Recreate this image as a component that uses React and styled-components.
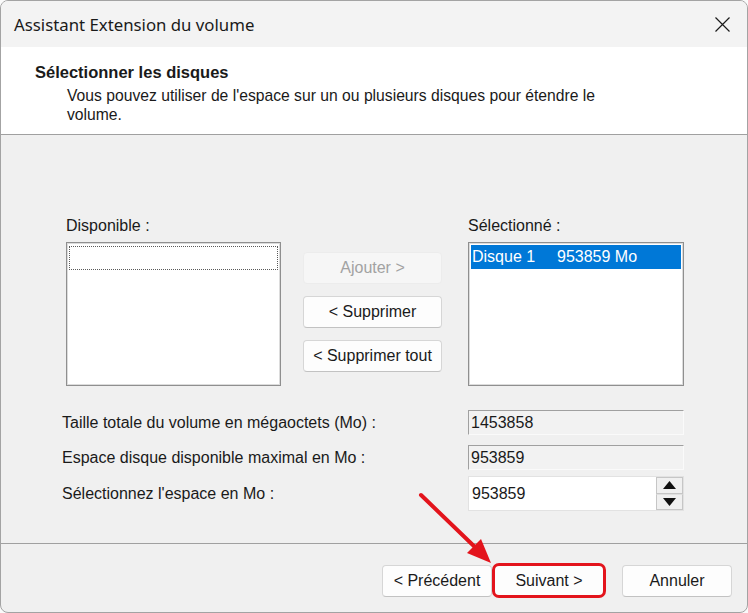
import React from "react";
import styled, { createGlobalStyle } from "styled-components";

const GlobalStyle = createGlobalStyle`
  html, body {
    margin: 0;
    padding: 0;
    background: #fafafa;
  }
  body {
    font-family: "Liberation Sans", Arial, sans-serif;
  }
`;

const Window = styled.div`
  position: relative;
  box-sizing: border-box;
  width: 748px;
  height: 613px;
  border: 1px solid #a3a3a3;
  border-radius: 8px;
  overflow: hidden;
  display: flex;
  flex-direction: column;
  background: #f0f0f0;
  color: #1a1a1a;
  font: 16px "Liberation Sans", Arial, sans-serif;
`;

const TitleBar = styled.div`
  height: 46px;
  flex: none;
  display: flex;
  align-items: center;
  justify-content: space-between;
  padding-left: 13px;
  background: #f3f3f3;
`;

const Title = styled.span`
  font: 16.8px "Noto Sans", "Open Sans", sans-serif;
  color: #1a1a1a;
`;

const CloseButton = styled.div`
  width: 50px;
  height: 46px;
  display: flex;
  align-items: center;
  justify-content: center;
`;

const Header = styled.div`
  box-sizing: border-box;
  height: 88px;
  flex: none;
  padding: 16px 0 0 34px;
  background: #fff;
  border-bottom: 1px solid #a0a0a0;
`;

const Heading = styled.div`
  font-weight: bold;
  font-size: 16.5px;
  line-height: 18px;
`;

const SubText = styled.div`
  margin: 5px 0 0 32px;
  width: 560px;
  font-size: 15.7px;
  line-height: 19px;
`;

const Content = styled.div`
  flex: 1;
  padding: 82px 0 0 61px;
`;

const ListsRow = styled.div`
  display: flex;
  margin-left: 4px;
`;

const ListColumn = styled.div`
  display: flex;
  flex-direction: column;
  width: ${(p) => p.$width}px;
`;

const Label = styled.div`
  line-height: 18px;
  margin-bottom: 7px;
`;

const ListBox = styled.div`
  box-sizing: border-box;
  height: 144px;
  padding: 2px;
  background: #fff;
  border: 1px solid #8f8f8f;
  box-shadow: inset 0 0 0 1px #dcdcdc;
`;

const FocusRow = styled.div`
  box-sizing: border-box;
  height: 24px;
  margin-top: 1px;
  border: 1px dotted #5a5a5a;
`;

const SelectedRow = styled.div`
  display: grid;
  grid-template-columns: 85px 1fr;
  height: 24px;
  align-items: center;
  padding-left: 1px;
  background: #0078d7;
  color: #fff;
`;

const ButtonsColumn = styled.div`
  display: flex;
  flex-direction: column;
  gap: 12px;
  width: 139px;
  margin: 35px 26px 0 22px;
`;

const Button = styled.button`
  box-sizing: border-box;
  height: 32px;
  width: ${(p) => (p.$width ? `${p.$width}px` : "100%")};
  margin-left: ${(p) => p.$offset || 0}px;
  padding: 0;
  font: 16px "Liberation Sans", Arial, sans-serif;
  color: #1a1a1a;
  background: #fdfdfd;
  border: 1px solid #d6d6d6;
  border-bottom-color: #c2c2c2;
  border-radius: 4px;

  &:disabled {
    color: #a2a2a2;
    background: #f6f6f6;
    border-color: #ececec;
  }
`;

const Fields = styled.div`
  margin-top: 24px;
  display: flex;
  flex-direction: column;
`;

const FieldRow = styled.div`
  display: grid;
  grid-template-columns: 406px 216px;
  align-items: center;
  margin-top: ${(p) => p.$gap || 0}px;
`;

const ReadonlyField = styled.div`
  box-sizing: border-box;
  height: 25px;
  padding-left: 2px;
  display: flex;
  align-items: center;
  background: #f2f2f2;
  border: 1px solid;
  border-color: #a0a0a0 #fafafa #fafafa #a0a0a0;
`;

const SpinField = styled.div`
  box-sizing: border-box;
  height: 35px;
  display: flex;
  align-items: center;
  padding: 0 0 0 3px;
  background: #fff;
  border: 1px solid #e2e2e2;
`;

const SpinValue = styled.span`
  flex: 1;
`;

const Spinner = styled.div`
  display: flex;
  flex-direction: column;
  width: 27px;
  height: 33px;
`;

const SpinButton = styled.div`
  box-sizing: border-box;
  flex: 1;
  display: flex;
  align-items: center;
  justify-content: center;
  background: #f0f0f0;
  border: 1px solid #c6c6c6;
  & + & {
    border-top-color: #e0e0e0;
  }
`;

const Footer = styled.div`
  box-sizing: border-box;
  height: 69px;
  flex: none;
  display: flex;
  justify-content: flex-end;
  align-items: flex-start;
  padding: 21px 15px 0 0;
  border-top: 1px solid #a0a0a0;
`;

const Highlight = styled.div`
  position: relative;
  margin-left: 2px;
  &::after {
    content: "";
    position: absolute;
    top: -2px;
    left: -2px;
    right: -2px;
    bottom: -1px;
    border: 3px solid #e3141c;
    border-radius: 7px;
    pointer-events: none;
  }
`;

const ArrowLayer = styled.svg`
  position: absolute;
  top: -1px;
  left: -1px;
  pointer-events: none;
`;

function Triangle({ up }) {
  return (
    <svg width="13" height="8" viewBox="0 0 13 8">
      <polygon points={up ? "6.5,0 13,8 0,8" : "0,0 13,0 6.5,8"} fill="#111" />
    </svg>
  );
}

export default function App() {
  return (
    <>
      <GlobalStyle />
      <Window>
        <TitleBar>
          <Title>Assistant Extension du volume</Title>
          <CloseButton>
            <svg width="15" height="15" viewBox="0 0 15 15">
              <path d="M0.5 0.5 L14.5 14.5 M14.5 0.5 L0.5 14.5" stroke="#1a1a1a" strokeWidth="1.2" />
            </svg>
          </CloseButton>
        </TitleBar>

        <Header>
          <Heading>Sélectionner les disques</Heading>
          <SubText>
            Vous pouvez utiliser de l'espace sur un ou plusieurs disques pour étendre le volume.
          </SubText>
        </Header>

        <Content>
          <ListsRow>
            <ListColumn $width={215}>
              <Label>Disponible :</Label>
              <ListBox>
                <FocusRow />
              </ListBox>
            </ListColumn>
            <ButtonsColumn>
              <Button disabled>Ajouter &gt;</Button>
              <Button>&lt; Supprimer</Button>
              <Button>&lt; Supprimer tout</Button>
            </ButtonsColumn>
            <ListColumn $width={216}>
              <Label>Sélectionné :</Label>
              <ListBox>
                <SelectedRow>
                  <span>Disque 1</span>
                  <span>953859 Mo</span>
                </SelectedRow>
              </ListBox>
            </ListColumn>
          </ListsRow>

          <Fields>
            <FieldRow>
              <span>Taille totale du volume en mégaoctets (Mo) :</span>
              <ReadonlyField>1453858</ReadonlyField>
            </FieldRow>
            <FieldRow $gap={10}>
              <span>Espace disque disponible maximal en Mo :</span>
              <ReadonlyField>953859</ReadonlyField>
            </FieldRow>
            <FieldRow $gap={6}>
              <span>Sélectionnez l'espace en Mo :</span>
              <SpinField>
                <SpinValue>953859</SpinValue>
                <Spinner>
                  <SpinButton><Triangle up /></SpinButton>
                  <SpinButton><Triangle /></SpinButton>
                </Spinner>
              </SpinField>
            </FieldRow>
          </Fields>
        </Content>

        <Footer>
          <Button $width={110}>&lt; Précédent</Button>
          <Highlight>
            <Button $width={110}>Suivant &gt;</Button>
          </Highlight>
          <Button $width={110} $offset={18}>Annuler</Button>
        </Footer>

        <ArrowLayer width="748" height="613" viewBox="0 0 748 613">
          <line x1="421" y1="495" x2="477" y2="549" stroke="#e3141c" strokeWidth="4" strokeLinecap="round" />
          <polygon points="491,563 467,553 481,539" fill="#e3141c" />
        </ArrowLayer>
      </Window>
    </>
  );
}
